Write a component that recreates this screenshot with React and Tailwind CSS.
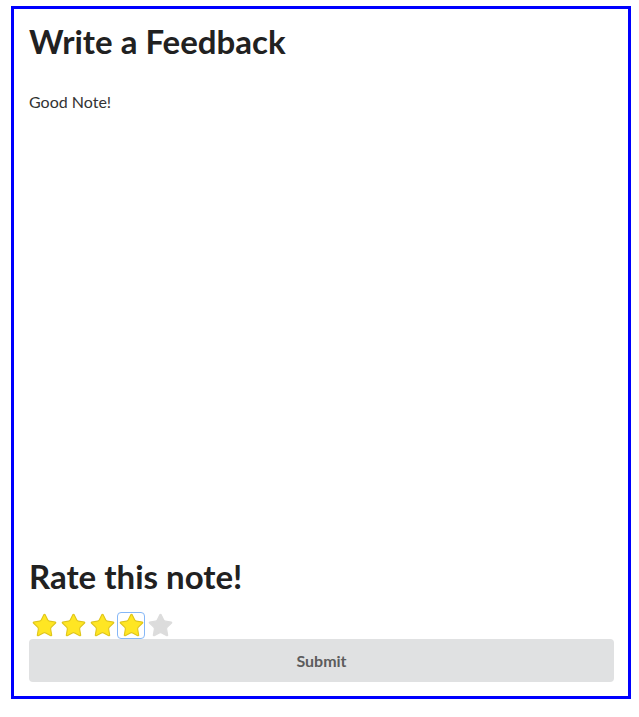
import { Star } from 'lucide-react';

const Stars = ({ rating, focused }) => {
    return (
        <div className="flex items-center gap-[5px] h-[23px]">
            {[1, 2, 3, 4, 5].map((i) => (
                <div
                    key={i}
                    className={`flex items-center justify-center w-[24px] h-[23px] rounded-[2px] ${i === focused ? 'outline outline-1 outline-offset-[1px] outline-[#85b7f7]' : ''}`}
                >
                    <Star
                        size={27}
                        strokeWidth={1}
                        className="shrink-0"
                        fill={i <= rating ? '#ffe623' : '#dcdcdc'}
                        stroke={i <= rating ? '#dfc51a' : '#dcdcdc'}
                    />
                </div>
            ))}
        </div>
    );
};

const App = () => {
    return (
        <div className="bg-white w-[639px] h-[717px] pt-[6px] pl-[11px]" style={{ fontFamily: 'Lato, "Liberation Sans", sans-serif' }}>
            <div className="w-[620px] h-[693px] border-[3px] border-[#0000ff] pl-[15px] pr-[14px] pt-[11px] pb-[14px] flex flex-col">
                <h1 className="text-[33px] font-bold leading-[42px] text-[#212121]">Write a Feedback</h1>
                <div className="mt-[29px] text-[16px] leading-[22px] text-[#333] flex-1">Good Note!</div>
                <h2 className="text-[33px] font-bold leading-[42px] text-[#212121]">Rate this note!</h2>
                <div className="mt-[17px] pl-[3px]">
                    <Stars rating={4} focused={4} />
                </div>
                <button className="mt-[2px] h-[43px] w-full bg-[#e0e1e2] rounded-[4px] text-[16px] font-bold text-[#5c5c5c]">
                    Submit
                </button>
            </div>
        </div>
    );
};

export default App;
